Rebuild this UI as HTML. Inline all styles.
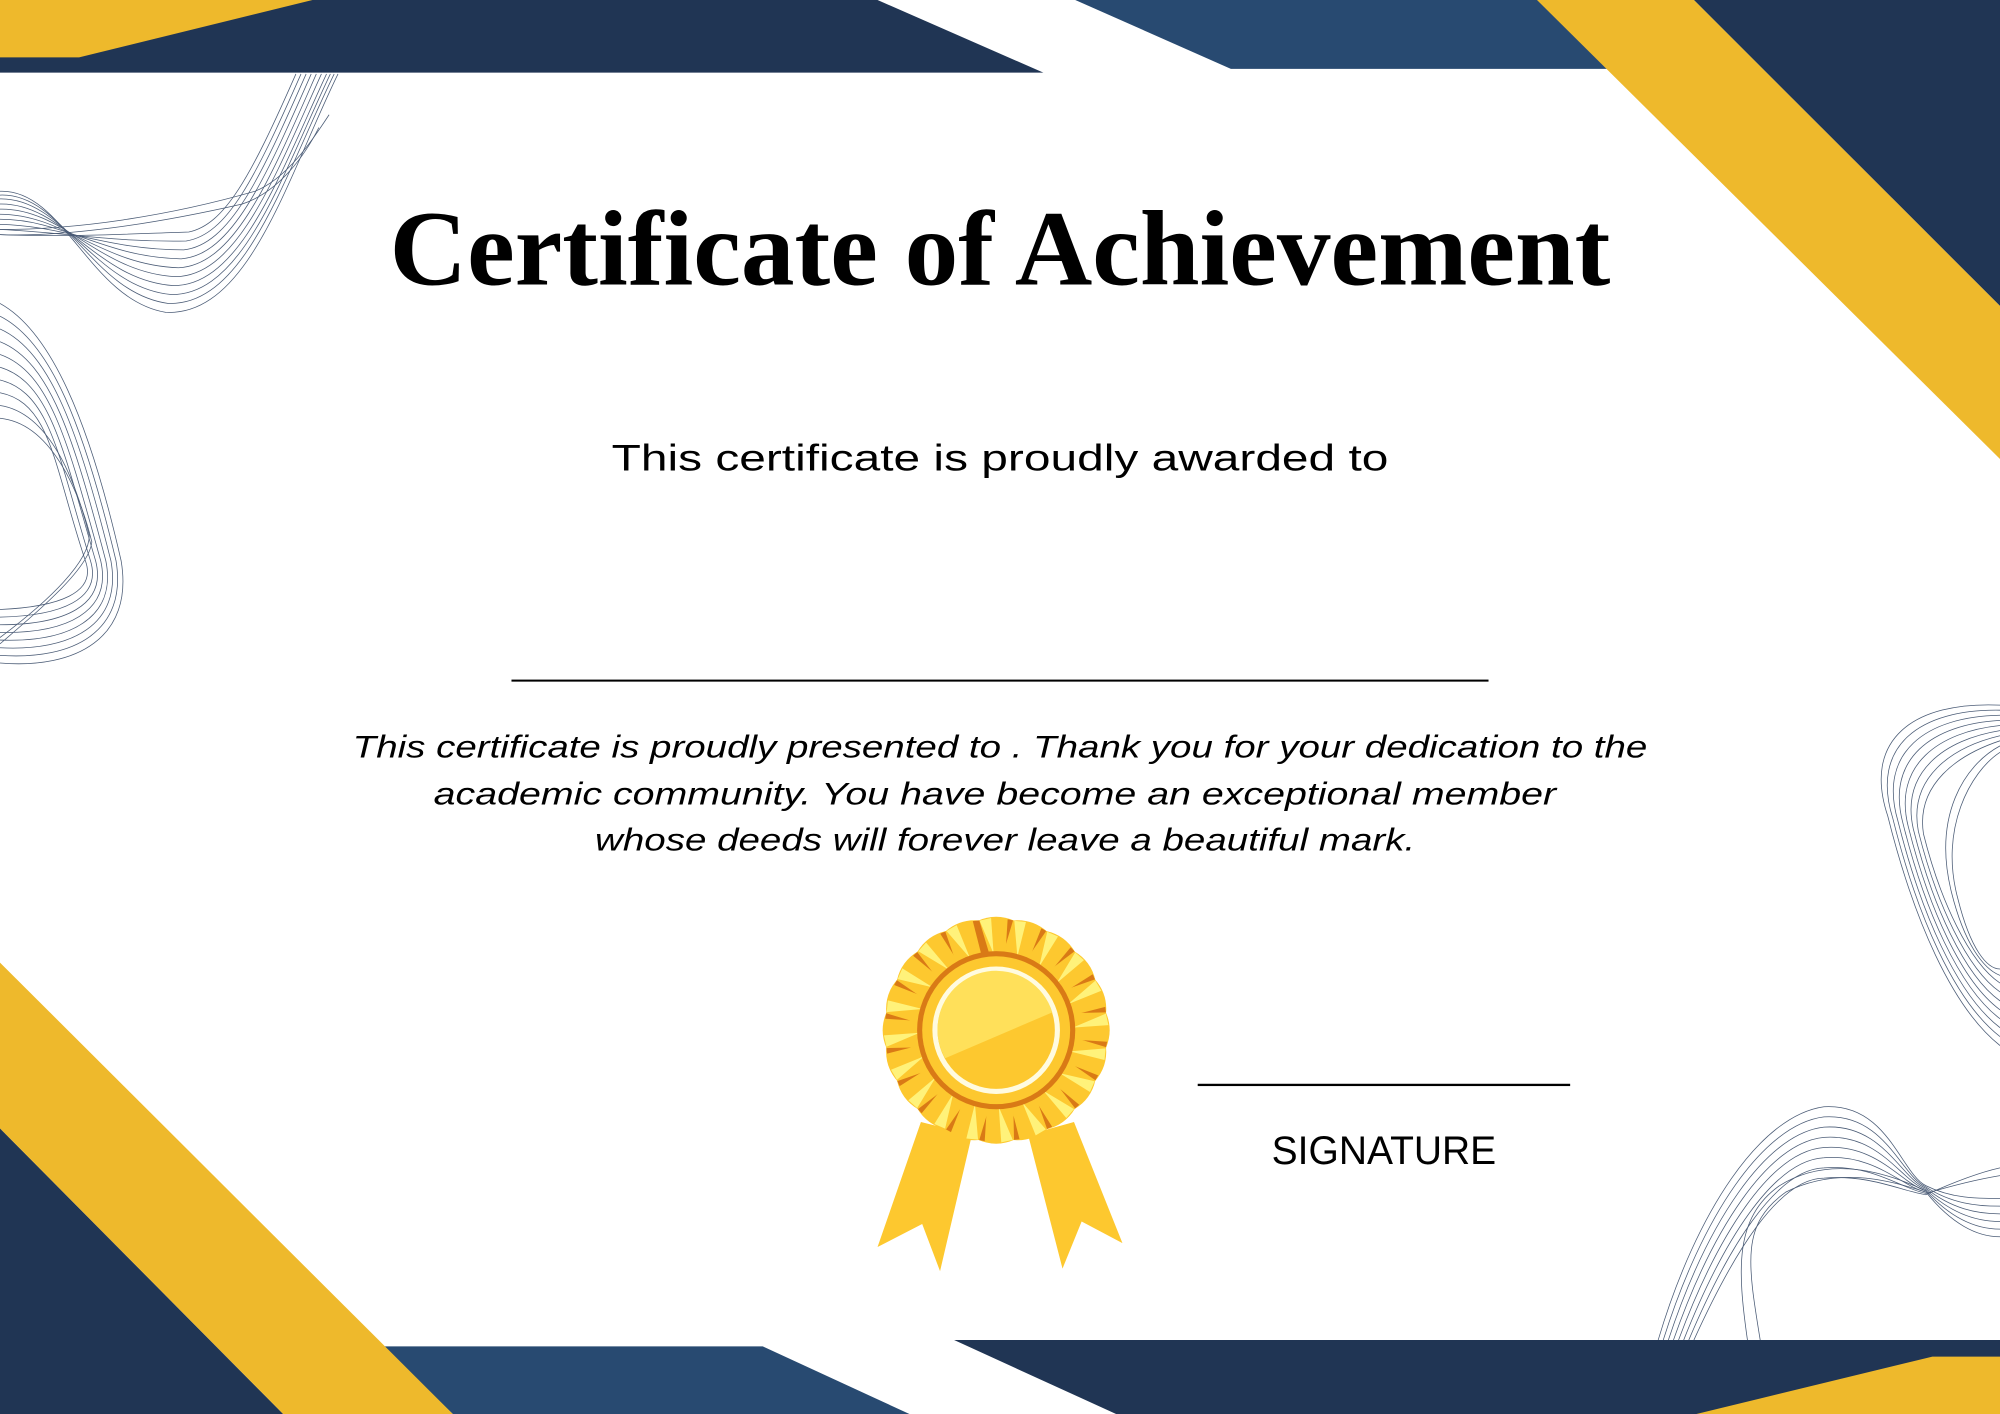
<!DOCTYPE html>
<html><head><meta charset="utf-8"><style>
html,body{margin:0;padding:0;background:#fff;overflow:hidden}
svg{display:block}
</style></head><body>
<svg width="2000" height="1414" viewBox="0 0 1568 1109" preserveAspectRatio="none" xmlns="http://www.w3.org/2000/svg">
<rect width="1568" height="1109" fill="#fff"/>
<polygon points="0,0 688,0 818,57 0,57" fill="#203554"/>
<polygon points="0,0 245,0 62,45 0,45" fill="#eeb92c"/>
<polygon points="843,0 1260,0 1260,54 965,54" fill="#284a71"/>
<polygon points="1328,0 1568,0 1568,240" fill="#203554"/>
<polygon points="1205,0 1328,0 1568,240 1568,360" fill="#eeb92c"/>
<polygon points="300,1056 598,1056 713,1109 355,1109" fill="#284a71"/>
<polygon points="0,885 222,1109 0,1109" fill="#203554"/>
<polygon points="0,755 355,1109 222,1109 0,885" fill="#eeb92c"/>
<polygon points="748,1051 1568,1051 1568,1109 875,1109" fill="#203554"/>
<polygon points="1515,1064 1568,1064 1568,1109 1330,1109" fill="#eeb92c"/>

<g fill="none" stroke="#2b3f5e" stroke-width="0.6" opacity="0.85">
<path d="M0,150 C50,148 70,235 130,245 C195,248 225,140 265,58"/>
<path d="M0,153 C50,151 72,230 132,238 C192,240 222,140 262,58"/>
<path d="M0,156 C50,155 74,225 134,231 C190,232 220,140 259,58"/>
<path d="M0,160 C50,159 76,220 136,224 C188,224 218,140 256,58"/>
<path d="M0,164 C50,163 78,214 138,217 C186,216 215,140 252,58"/>
<path d="M0,168 C50,168 80,208 140,210 C184,208 212,140 248,58"/>
<path d="M0,172 C50,172 82,202 142,203 C182,200 208,140 244,58"/>
<path d="M0,176 C50,177 84,196 144,196 C180,192 204,140 240,58"/>
<path d="M0,180 C50,182 86,190 146,189 C178,184 200,140 236,58"/>
<path d="M0,184 C50,186 88,184 148,182 C176,176 196,140 232,58"/>
<path d="M0,184 C50,186 120,176 190,160 C220,150 240,120 250,100"/>
<path d="M0,180 C60,180 130,170 200,150 C225,140 245,110 258,90"/>

<path d="M0,238 C40,260 70,330 95,440 C105,500 60,525 0,520"/>
<path d="M0,248 C40,268 66,335 91,440 C100,495 58,518 0,514"/>
<path d="M0,258 C40,276 62,340 87,440 C96,490 56,511 0,508"/>
<path d="M0,268 C40,284 58,345 83,440 C92,485 54,504 0,502"/>
<path d="M0,278 C40,292 54,350 79,440 C88,480 52,497 0,496"/>
<path d="M0,288 C40,300 50,355 75,440 C84,475 50,490 0,490"/>
<path d="M0,298 C40,308 46,360 71,440 C80,470 48,483 0,484"/>
<path d="M0,308 C40,316 42,365 67,440 C76,465 46,476 0,478"/>
<path d="M0,318 C40,324 60,380 70,420 C70,440 40,470 0,500"/>
<path d="M0,328 C40,332 62,385 72,425 C70,445 35,475 0,505"/>

<path d="M1568,553 C1500,550 1460,580 1480,640 C1500,720 1530,790 1568,820"/>
<path d="M1568,557 C1505,556 1466,585 1484,642 C1503,718 1532,785 1568,813"/>
<path d="M1568,561 C1510,562 1472,590 1488,644 C1506,716 1534,780 1568,806"/>
<path d="M1568,565 C1515,568 1478,595 1492,646 C1509,714 1536,775 1568,799"/>
<path d="M1568,569 C1520,574 1484,600 1496,648 C1512,712 1538,770 1568,792"/>
<path d="M1568,573 C1525,580 1490,605 1500,650 C1515,710 1540,765 1568,785"/>
<path d="M1568,577 C1530,586 1496,610 1504,652 C1518,708 1542,760 1568,778"/>
<path d="M1568,581 C1535,592 1502,615 1508,654 C1521,706 1544,755 1568,771"/>
<path d="M1568,585 C1540,600 1515,640 1530,700 C1540,740 1555,760 1568,765"/>
<path d="M1568,590 C1545,605 1520,650 1535,705 C1545,745 1558,760 1568,760"/>

<path d="M1300,1051 C1330,950 1380,875 1430,868 C1480,865 1490,920 1510,930 C1530,940 1550,940 1568,940"/>
<path d="M1304,1051 C1334,955 1382,882 1430,876 C1478,873 1490,922 1510,931 C1530,944 1550,946 1568,946"/>
<path d="M1308,1051 C1338,960 1384,889 1430,884 C1476,881 1490,924 1510,932 C1530,948 1550,952 1568,952"/>
<path d="M1312,1051 C1342,965 1386,896 1430,892 C1474,889 1490,926 1510,933 C1530,952 1550,958 1568,958"/>
<path d="M1316,1051 C1346,970 1388,903 1430,900 C1472,897 1490,928 1510,934 C1530,956 1550,964 1568,964"/>
<path d="M1320,1051 C1350,975 1390,910 1430,908 C1470,905 1490,930 1510,935 C1530,960 1550,970 1568,970"/>
<path d="M1324,1051 C1354,980 1392,917 1430,916 C1468,913 1490,932 1510,936 C1530,930 1550,925 1568,922"/>
<path d="M1328,1051 C1358,985 1394,924 1430,924 C1466,921 1490,934 1510,937 C1530,928 1550,920 1568,916"/>
<path d="M1380,1051 C1370,990 1365,960 1400,935 C1440,915 1480,925 1510,935"/>
<path d="M1370,1051 C1362,995 1360,955 1395,930 C1435,905 1480,920 1510,934"/>
</g>

<text x="784" y="223" text-anchor="middle" font-family="Liberation Serif, serif" font-weight="bold" font-size="84" fill="#000" textLength="957" lengthAdjust="spacingAndGlyphs">Certificate of Achievement</text>
<text x="784" y="369" text-anchor="middle" font-family="Liberation Sans, sans-serif" font-size="29" fill="#000" textLength="609" lengthAdjust="spacingAndGlyphs">This certificate is proudly awarded to</text>
<rect x="401" y="533" width="766" height="1.6" fill="#000"/>
<g font-family="Liberation Sans, sans-serif" font-style="italic" font-size="25" fill="#000" text-anchor="middle">
<text x="784" y="594" textLength="1015" lengthAdjust="spacingAndGlyphs">This certificate is proudly presented to . Thank you for your dedication to the</text>
<text x="780" y="631" textLength="880" lengthAdjust="spacingAndGlyphs">academic community. You have become an exceptional member</text>
<text x="788" y="667" textLength="643" lengthAdjust="spacingAndGlyphs">whose deeds will forever leave a beautiful mark.</text>
</g>
<rect x="939" y="850" width="292" height="1.8" fill="#000"/>
<text x="1085" y="913" text-anchor="middle" font-family="Liberation Sans, sans-serif" font-size="31" fill="#000" textLength="176" lengthAdjust="spacingAndGlyphs">SIGNATURE</text>

<polygon points="722,880 762,890 737,997 723,960 688,978" fill="#fdc82f"/>
<polygon points="806,890 842,880 880,975 848,958 833,995" fill="#fdc82f"/>
<defs>
<g id="pet">
<path d="M-14,-86 Q0,-92 14,-86 L13,-40 L-13,-40Z" fill="#fdc82f"/>
<path d="M-13,-86 L-4,-88 L-2,-60Z" fill="#fff27a"/>
<path d="M9,-87 L14,-86 L13,-40 L6,-40Z" fill="#d97a16"/>
</g>
</defs>
<g transform="translate(781,808)">
<circle r="84" fill="#fdc82f"/>
<use href="#pet" transform="rotate(0)"/>
<use href="#pet" transform="rotate(18)"/>
<use href="#pet" transform="rotate(36)"/>
<use href="#pet" transform="rotate(54)"/>
<use href="#pet" transform="rotate(72)"/>
<use href="#pet" transform="rotate(90)"/>
<use href="#pet" transform="rotate(108)"/>
<use href="#pet" transform="rotate(126)"/>
<use href="#pet" transform="rotate(144)"/>
<use href="#pet" transform="rotate(162)"/>
<use href="#pet" transform="rotate(180)"/>
<use href="#pet" transform="rotate(198)"/>
<use href="#pet" transform="rotate(216)"/>
<use href="#pet" transform="rotate(234)"/>
<use href="#pet" transform="rotate(252)"/>
<use href="#pet" transform="rotate(270)"/>
<use href="#pet" transform="rotate(288)"/>
<use href="#pet" transform="rotate(306)"/>
<use href="#pet" transform="rotate(324)"/>
<use href="#pet" transform="rotate(342)"/>
<circle r="62" fill="#d97a16"/>
<circle r="58" fill="#fdc82f"/>
<circle r="50" fill="#fffbe0"/>
<circle r="46" fill="#fdc82f"/>
<path d="M-46,0 A46,46 0 0 1 44,-14 L-40,22 A46,46 0 0 1 -46,0Z" fill="#ffe05a"/>
</g>
</svg>
</body></html>
